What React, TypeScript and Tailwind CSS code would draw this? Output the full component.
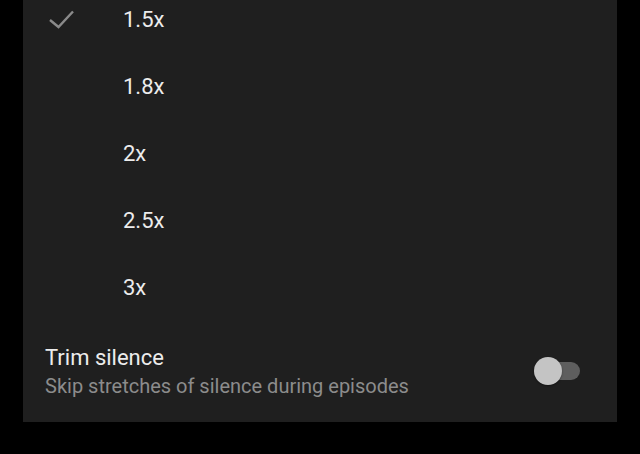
import React from "react";

const speeds = ["1.5x", "1.8x", "2x", "2.5x", "3x"];

export default function App() {
  return (
    <div className="w-[640px] h-[454px] bg-black overflow-hidden" style={{ fontFamily: "Roboto, 'Liberation Sans', sans-serif" }}>
      <div className="mx-[23px] w-[594px] bg-[#1f1f1f] -mt-[14px] pb-[24px]">
        {speeds.map((s, i) => (
          <div key={s} className="h-[67px] flex items-center">
            <div className="w-[100px] h-full flex items-center pl-[26px]">
              {i === 0 && (
                <svg width="26" height="20" viewBox="0 0 26 20">
                  <polyline points="1,10 9.5,17 24,1.5" fill="none" stroke="#8a8a8a" strokeWidth="2.4" strokeLinecap="butt" strokeLinejoin="miter" />
                </svg>
              )}
            </div>
            <span className="text-[22px] text-[#ececec] leading-none">{s}</span>
          </div>
        ))}
        <div className="flex items-center pl-[22px] pr-[37px] pt-[23px]">
          <div className="flex-1 flex flex-col">
            <span className="text-[22px] leading-[28px] text-[#ececec]">Trim silence</span>
            <span className="text-[20px] leading-[24px] text-[#8c8c8c] mt-[2px]">Skip stretches of silence during episodes</span>
          </div>
          <div className="relative w-[46px] h-[28px] flex items-center">
            <div className="absolute right-0 w-[40px] h-[18px] rounded-full bg-[#5e5e5e]" />
            <div className="absolute left-0 w-[28px] h-[28px] rounded-full bg-[#c4c4c4] shadow-[0_1px_2px_rgba(0,0,0,0.4)]" />
          </div>
        </div>
      </div>
    </div>
  );
}
